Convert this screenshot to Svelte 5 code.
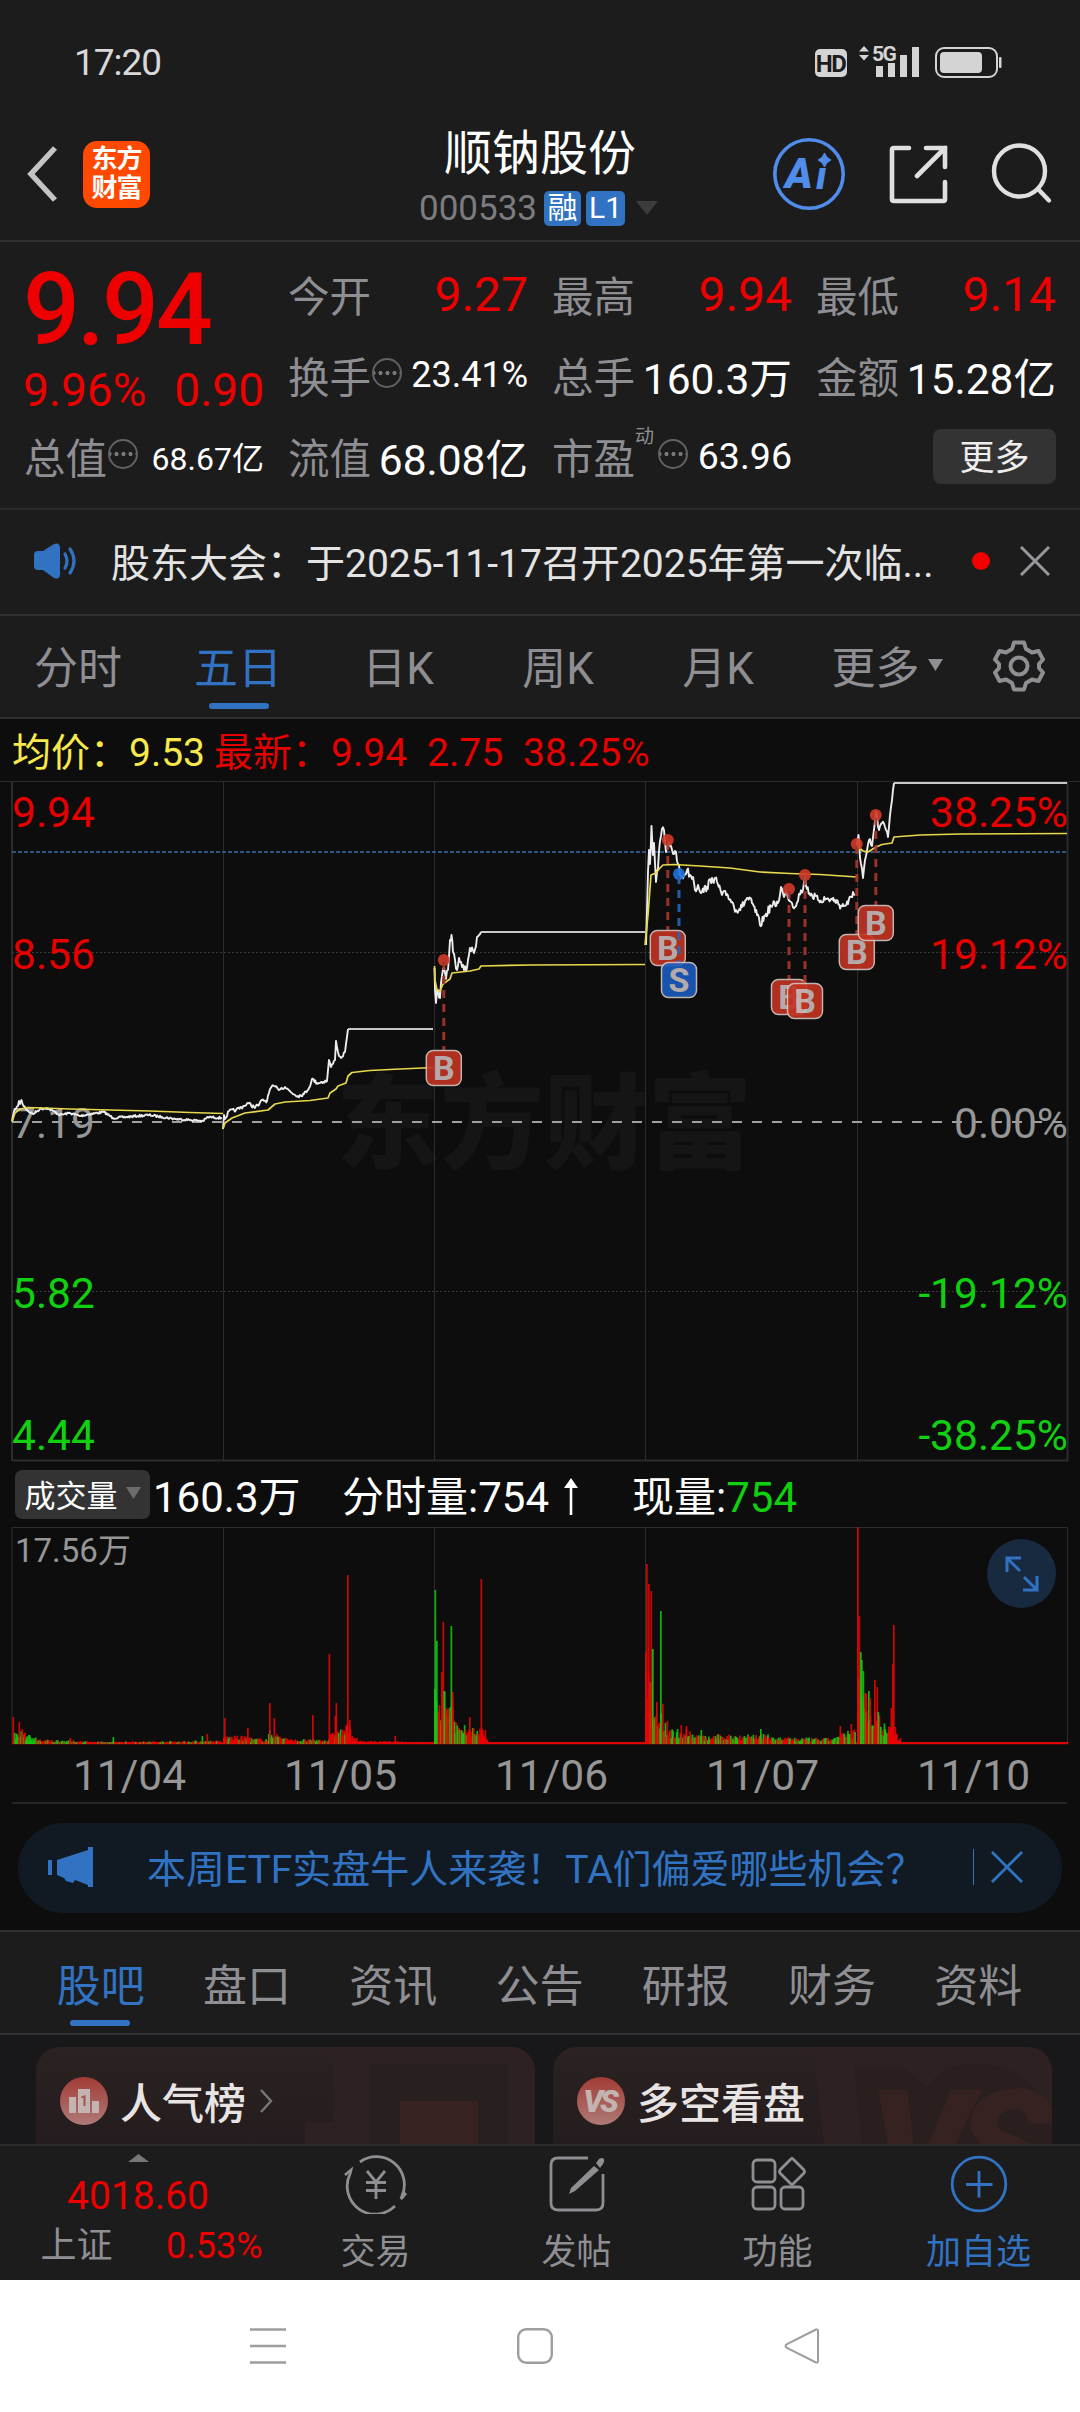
<script>
  const quoteRows = [
    [
      { label: '今开', value: '9.27', tone: 'up' },
      { label: '最高', value: '9.94', tone: 'up' },
      { label: '最低', value: '9.14', tone: 'up' },
    ],
    [
      { label: '换手', value: '23.41%', tip: true, size: 'small' },
      { label: '总手', value: '160.3万' },
      { label: '金额', value: '15.28亿' },
    ],
  ];
  const periods = ['分时', '五日', '日K', '周K', '月K'];
  const sections = ['股吧', '盘口', '资讯', '公告', '研报', '财务', '资料'];
  const dates = ['11/04', '11/05', '11/06', '11/07', '11/10'];

  let activePeriod = '五日';
  let activeSection = '股吧';

  const dayLines = [223, 434, 645, 857];

  let seed = 7;
  function random() {
    seed = (seed * 16807) % 2147483647;
    return seed / 2147483647;
  }

  // fills the gaps between key points with minute-level ticks
  function ticks(points, amp) {
    const out = [];
    for (let i = 0; i < points.length - 1; i++) {
      const [x1, y1] = points[i];
      const [x2, y2] = points[i + 1];
      const steps = Math.max(1, Math.round((x2 - x1) / 0.9));
      for (let s = 0; s < steps; s++) {
        const t = s / steps;
        const shake = s === 0 ? 0 : (random() - 0.5) * amp;
        out.push(`${(x1 + (x2 - x1) * t).toFixed(1)},${(y1 + (y2 - y1) * t + shake).toFixed(1)}`);
      }
    }
    const last = points[points.length - 1];
    out.push(`${last[0]},${last[1]}`);
    return out.join(' ');
  }

  const priceLines = [
    ticks([[12, 341], [13, 336], [15, 329], [18, 326], [19, 321], [20, 324], [21.5, 320], [23, 325], [28, 331], [33, 334], [40, 329], [47, 328], [53, 331], [60, 335], [70, 333], [80, 336], [90, 334], [104, 332], [113, 338], [126, 337], [138, 336], [149, 335], [162, 337], [176, 339], [190, 340], [203, 341], [208, 337], [222, 338]], 2.2),
    ticks([[223, 349], [224, 335], [225, 339], [229, 331], [236, 330], [244, 326], [248, 323], [254, 327], [259, 325], [262, 320], [267, 321], [270, 309], [274, 306], [278, 309], [285, 307], [292, 313], [298, 316], [304, 314], [309, 308], [312, 299], [317, 303], [327, 301], [329, 280], [331, 287], [335, 280], [336, 261], [339, 276], [341, 278], [345, 272], [347, 257], [348, 249]], 3.2),
    ticks([[434.5, 188], [435, 210], [436, 223], [437, 211], [438, 210], [440, 218], [442, 196], [444, 188], [446, 199], [448, 190], [450, 160], [451.5, 155], [453, 172], [455, 180], [457, 190], [459, 178], [460, 182], [462, 187], [466, 191], [468, 180], [470, 168], [474, 173], [477, 157], [479, 155], [481, 152]], 8),
    ticks([[646, 165], [648, 92], [649, 70], [650, 84], [651.5, 46], [653, 75], [654, 63], [656, 102], [658, 88], [660, 61], [662, 49], [664, 50], [666, 72], [668, 64], [671, 66], [674, 74], [676, 72], [678, 84], [681, 98], [684, 95], [687, 90], [690, 95], [693, 97], [695, 110], [698, 105], [702, 112], [707, 107], [712, 98], [717, 102], [722, 115], [727, 114], [732, 122], [736, 130], [742, 127], [747, 118], [752, 123], [757, 135], [760, 145], [765, 136], [771, 126], [778, 123], [781, 107], [784, 117], [787, 113], [791, 122], [795, 127], [799, 114], [803, 110], [805, 97], [807, 109], [812, 115], [818, 120], [826, 119], [835, 120], [841, 126], [848, 124], [853, 112], [855, 115]], 8),
    ticks([[857, 65], [858.5, 55], [860, 78], [863, 98], [866, 76], [869, 60], [872, 66], [874, 50], [876, 32], [879, 50], [882, 43], [885, 47], [888, 57], [890, 35], [893, 10], [894, 3]], 7),
  ];
  const limitLines = ['348,249 433,249', '481,152 645,152', '894,3 1067,3'];
  const averageLines = [
    '12,342 15,333 20,329 28,327.5 70,329 110,330 150,331 190,332.5 223,333.5',
    '223,349 225,343 232,338 245,333 268,330 275,324 285,322 310,320.5 328,318 330,313 336,309 338,306 346,303 348,296 352,292.5 370,290.5 400,289 434,287.5',
    '434.5,186 435,200 437,210 440,211 443,204 450,199 452,193 470,191 479,189 481,186 530,185 645,184.5',
    '645,165 648,135 651,95 656,93 660,88 663,85 674,84.5 700,86 730,88 760,92 790,93.5 820,94.5 857,97',
    '857,66 863,71 868,72 876,67 882,64.5 892,63 894,57 920,55 960,54 1067,53.5',
  ];

  const trades = [
    { x: 443.8, dot: 180, box: 288, side: 'B' },
    { x: 667.8, dot: 60, box: 168, side: 'B' },
    { x: 679, dot: 94, box: 200, side: 'S' },
    { x: 789, dot: 109, box: 217, side: 'B' },
    { x: 805, dot: 95, box: 221, side: 'B' },
    { x: 856.8, dot: 64, box: 172, side: 'B' },
    { x: 875.8, dot: 35, box: 143, side: 'B' },
  ];

  // [from, to, height at start, height at end, share of rising minutes]
  const volumeRanges = [
    [13, 24, 10, 12, 0.6], [24, 40, 9, 4, 0.4], [40, 90, 4, 2.5, 0.6], [90, 220, 2, 3, 0.75],
    [223, 250, 7, 7, 0.7], [250, 268, 5, 5, 0.6], [268, 288, 12, 5, 0.6], [288, 328, 4, 4, 0.6],
    [328, 346, 8, 16, 0.7], [346, 356, 18, 5, 1], [356, 434, 3, 1.6, 1],
    [434, 442, 58, 40, 0.6], [442, 452, 48, 42, 0.6], [452, 462, 26, 10, 0.3], [462, 482, 16, 14, 0.6], [482, 487, 12, 3, 1], [487, 645, 1.6, 1.6, 1],
    [645, 652, 80, 60, 0.9], [652, 665, 38, 24, 0.4], [665, 690, 12, 14, 0.5], [690, 712, 9, 6, 0.6], [712, 760, 8, 9, 0.55], [760, 775, 9, 7, 0.6], [775, 830, 6, 5, 0.6], [830, 855, 5, 14, 0.6],
    [857, 866, 60, 45, 0.5], [866, 880, 36, 24, 0.7], [880, 888, 20, 15, 0.4], [888, 900, 16, 5, 1], [900, 1067, 1.6, 1.6, 1],
  ];
  const volumePeaks = [
    [13, 27, 1], [19, 22, 1], [22, 15, 1], [29, 9, 0], [70, 6, 1], [113, 7, 0], [202, 8, 0], [207, 10, 1],
    [224.5, 26, 1], [247.5, 16, 1], [269.5, 41, 1], [274, 26, 1], [312.5, 29, 1], [329, 90, 1], [336, 41, 1], [335, 28, 1], [347.5, 169, 1], [349.5, 24, 1], [395, 8, 1],
    [435, 154, 0], [436.5, 103, 0], [441.5, 72, 1], [443, 122, 1], [444, 53, 0], [447, 34, 1], [451, 118, 0], [452.5, 52, 1], [469.5, 27, 1], [481, 165, 1], [485, 14, 1],
    [646.5, 180, 1], [648.5, 160, 1], [651, 153, 1], [652.5, 95, 0], [656.5, 42, 1], [660.5, 133, 0], [662.5, 40, 1], [667, 23, 1], [681, 19, 1], [686, 18, 1], [701, 14, 0], [760.5, 15, 0], [840, 18, 1], [851, 20, 1],
    [857.5, 217, 1], [859, 128, 1], [860.5, 92, 0], [861.5, 84, 0], [863, 73, 0], [866, 50, 1], [868.5, 53, 0], [870, 46, 1], [874.5, 64, 1], [877, 57, 1], [878, 32, 0], [891, 36, 1], [892.5, 80, 1], [893.5, 119, 1], [895, 17, 1],
  ];
  const bars = [];
  for (const [from, to, start, end, rising] of volumeRanges) {
    for (let x = from; x < to; x += 0.9) {
      const base = start + ((end - start) * (x - from)) / (to - from);
      bars.push({ x, h: Math.max(1.6, base * (0.4 + random() * 0.8)), up: random() < rising });
    }
  }
  for (const [x, h, up] of volumePeaks) bars.push({ x: x - 0.5, h, up: up === 1 });
</script>

<div class="screen">
  <div class="status">
    <span class="clock">17:20</span>
    <svg width="192" height="36" viewBox="812 44 192 36">
      <rect x="815" y="49" width="32" height="28" rx="5" fill="#d4d4d4" />
      <text x="830.500" y="71.500" class="hd">HD</text>
      <path d="M859 51.500 l5 -5.500 5 5.500z M859 55 l5 5.500 5 -5.500z" fill="#d4d4d4" />
      <text x="872" y="60.500" class="net">5G</text>
      <path d="M876 66h7v11h-7z M888 63h7v14h-7z M900 55h7v22h-7z M912 47h7v30h-7z" fill="#d4d4d4" />
      <rect x="936" y="48" width="61" height="29" rx="8" fill="none" stroke="#d4d4d4" stroke-width="2" />
      <rect x="940" y="52" width="42" height="21" rx="4" fill="#d4d4d4" />
      <rect x="999" y="57" width="2.500" height="11" rx="1" fill="#d4d4d4" />
    </svg>
  </div>

  <header>
    <div class="left">
      <svg width="34" height="58" viewBox="0 0 34 58">
        <path d="M30 3 L6 29 L30 55" fill="none" stroke="#c4c4c4" stroke-width="5.500" />
      </svg>
      <div class="logo"><span>东方</span><span>财富</span></div>
    </div>
    <div class="title">
      <h1>顺钠股份</h1>
      <div class="code">
        <span>000533</span><b>融</b><b class="level">L1</b>
        <svg width="22" height="14" viewBox="0 0 22 14"><path d="M0 0h22L11 14z" fill="#3c3c3c" /></svg>
      </div>
    </div>
    <div class="actions">
      <svg width="72" height="72" viewBox="0 0 72 72">
        <circle cx="36" cy="36" r="34.200" fill="none" stroke="#508cea" stroke-width="3.600" />
        <text x="12" y="49.500" class="ai">A</text>
        <text x="43" y="51" class="ai small">ı</text>
        <path d="M51.500 15 Q53 20 58 22 Q53 24 51.500 29 Q50 24 45 22 Q50 20 51.500 15z" fill="#508cea" stroke="#508cea" />
      </svg>
      <svg width="60" height="60" viewBox="0 0 60 60">
        <path d="M21 4 H6 Q4 4 4 6 V55 Q4 57 6 57 H55 Q57 57 57 55 V38 M38 4 H57 V23 M57 4 L29 32" fill="none" stroke="#e0e0e0" stroke-width="4.600" stroke-linecap="round" />
      </svg>
      <svg width="62" height="62" viewBox="0 0 62 62">
        <circle cx="28.500" cy="28" r="25.500" fill="none" stroke="#e0e0e0" stroke-width="4.400" />
        <path d="M47 46 L58 57.500" stroke="#e0e0e0" stroke-width="4.400" stroke-linecap="round" />
      </svg>
    </div>
  </header>

  <section class="quote">
    <div class="price">
      <strong>9.94</strong>
      <div class="change"><span>9.96%</span><span>0.90</span></div>
    </div>
    {#each quoteRows as row}
      {#each row as item}
        <div class="cell">
          <span class="label">{item.label}</span>
          {#if item.tip}<i class="tip"></i>{/if}
          <span class="value {item.tone ?? ''} {item.size ?? ''}">{item.value}</span>
        </div>
      {/each}
    {/each}
    <div class="cell">
      <span class="label">总值</span><i class="tip"></i><span class="value tiny">68.67亿</span>
    </div>
    <div class="cell"><span class="label">流值</span><span class="value">68.08亿</span></div>
    <div class="cell">
      <span class="label">市盈</span><sup>动</sup><i class="tip"></i><span class="value medium">63.96</span>
    </div>
    <div class="cell end"><button>更多</button></div>
  </section>

  <section class="news">
    <svg width="46" height="38" viewBox="0 0 46 38">
      <path d="M0 13 Q0 9 4 9 H9 L20 2 Q26 0 26 6 V32 Q26 38 20 36 L9 28 H4 Q0 28 0 24z" fill="#3173c2" />
      <path d="M31 12 Q35 19 31 26 M36 7 Q44 19 36 31" fill="none" stroke="#3173c2" stroke-width="3.200" stroke-linecap="round" />
    </svg>
    <p>股东大会：于2025-11-17召开2025年第一次临...</p>
    <i class="dot"></i>
    <svg width="30" height="30" viewBox="0 0 30 30"><path d="M1 1 L29 29 M29 1 L1 29" stroke="#98989c" stroke-width="3" /></svg>
  </section>

  <nav class="periods">
    {#each periods as period}
      <span class:active={period === activePeriod}>{period}</span>
    {/each}
    <span class="more">更多<svg width="15" height="12" viewBox="0 0 15 12"><path d="M0 0h15L7.500 12z" fill="#8e8e93" /></svg></span>
    <svg class="gear" width="54" height="54" viewBox="0 0 54 54">
      <path d="M22 3.500 H32 L34 10 L40 13.500 L46.500 12 L51 20.500 L47 25 V29 L51 33.500 L46.500 42 L40 40.500 L34 44 L32 50.500 H22 L20 44 L14 40.500 L7.500 42 L3 33.500 L7 29 V25 L3 20.500 L7.500 12 L14 13.500 L20 10z" />
      <circle cx="27" cy="27" r="8.500" />
    </svg>
  </nav>

  <section class="chart">
    <div class="legend">
      <span class="avg">均价：9.53</span>
      <span class="last">最新：<em>9.94</em><em>2.75</em><em>38.25%</em></span>
    </div>

    <svg class="plot" width="1080" height="682" viewBox="0 0 1080 682">
      <text x="336" y="381" class="watermark">东方财富</text>
      <g stroke="#2c2c2e">
        <path d="M0 1.500 H1080" />
        <path d="M12 1.500 V681 M1067.500 1.500 V681 M12 680.500 H1068" stroke-width="2" />
        {#each dayLines as x}
          <path d="M{x}.500 2 V680" />
        {/each}
        <path d="M12 172.500 H1067 M12 511.500 H1067" stroke="#3a3a3c" stroke-dasharray="2 2" />
      </g>
      <path d="M12 72 H1067" stroke="#2f5580" stroke-width="2" stroke-dasharray="4 2" />
      <path d="M12 342 H1067" stroke="#a0a0a0" stroke-width="1.800" stroke-dasharray="10 10" />

      <g class="scale">
        <text x="12" y="47" class="up">9.94</text>
        <text x="12" y="189" class="up">8.56</text>
        <text x="12" y="358" class="flat">7.19</text>
        <text x="12" y="528" class="down">5.82</text>
        <text x="12" y="670" class="down">4.44</text>
      </g>
      <g class="scale right">
        <text x="1068" y="47" class="up">38.25%</text>
        <text x="1068" y="189" class="up">19.12%</text>
        <text x="1068" y="358" class="flat">0.00%</text>
        <text x="1068" y="528" class="down">-19.12%</text>
        <text x="1068" y="670" class="down">-38.25%</text>
      </g>

      <g fill="none" stroke-linejoin="round">
        {#each priceLines as points}
          <polyline {points} stroke="#ececec" stroke-width="1.900" />
        {/each}
        {#each limitLines as points}
          <polyline {points} stroke="#c8c8c8" stroke-width="1.800" />
        {/each}
        {#each averageLines as points}
          <polyline {points} stroke="#e6d84a" stroke-width="1.700" />
        {/each}
      </g>

      {#each trades as t}
        <g class="trade" class:sell={t.side === 'S'}>
          <circle cx={t.x} cy={t.dot} r="6" />
          <path d="M{t.x} {t.dot + 2} V{t.box - 18}" stroke-width="3" stroke-dasharray="8 6" />
          <rect x={t.x - 17.5} y={t.box - 17.5} width="35" height="35" rx="7" />
          <text x={t.x} y={t.box + 12}>{t.side}</text>
        </g>
      {/each}
    </svg>

    <div class="volume-head">
      <button>成交量<svg width="15" height="12" viewBox="0 0 15 12"><path d="M0 0h15L7.500 12z" fill="#6c6c6c" /></svg></button>
      <span class="total">160.3万</span>
      <span class="minute">分时量:754</span>
      <svg class="arrow" width="14" height="37" viewBox="0 0 14 37"><path d="M5.700 6h2.600v31H5.700z M0 10 L7 0 L14 10z" fill="#fff" /></svg>
      <span class="now">现量:<em>754</em></span>
    </div>

    <div class="volume">
      <svg width="1080" height="219" viewBox="0 0 1080 219">
        <path d="M12 .500 H1068 M12 0 V217 M1067.500 0 V217" fill="none" stroke="#2c2c2e" />
        {#each dayLines as x}
          <path d="M{x}.500 0 V217" stroke="#2c2c2e" />
        {/each}
        <text x="15" y="35" class="max">17.56万</text>
        <path d="M12 216.200 H1068" stroke="#d01212" stroke-width="2" />
        {#each bars as bar}
          <rect x={bar.x} y={217 - bar.h} width="1.700" height={bar.h} fill={bar.up ? '#e80505' : '#12c812'} fill-opacity=".88" />
        {/each}
      </svg>
      <button class="expand" aria-label="全屏">
        <svg width="34" height="36" viewBox="0 0 34 36"><path d="M2 16 V2 H16 M2 2 L15 15 M32 20 V34 H18 M32 34 L19 21" fill="none" stroke="#3173c2" stroke-width="3" /></svg>
      </button>
    </div>

    <div class="dates">
      {#each dates as date}<span>{date}</span>{/each}
    </div>

    <div class="banner">
      <svg width="46" height="40" viewBox="0 0 46 40">
        <path d="M0 13h4v15H0z M9 13 L40 3 V0 H45 V40 H40 V38 L27 33 L25 36 L18 34 L16 31 L9 28z" fill="#3173c2" />
      </svg>
      <p>本周ETF实盘牛人来袭！TA们偏爱哪些机会？</p>
      <i></i>
      <svg width="34" height="34" viewBox="0 0 34 34"><path d="M2 2 L32 32 M32 2 L2 32" stroke="#3173c2" stroke-width="2.800" /></svg>
    </div>
  </section>

  <nav class="sections">
    {#each sections as section}
      <span class:active={section === activeSection}>{section}</span>
    {/each}
  </nav>

  <section class="cards">
    <div class="card">
      <svg class="art" width="260" height="98" viewBox="0 0 260 98">
        <path d="M30 98 V75 H59 V0 H260 V98z" fill="#2d2221" />
        <path d="M94 98 V17 H233 V98z" fill="#281f1f" />
        <path d="M125 98 V54 H203 V98z" fill="#352221" />
      </svg>
      <svg width="48" height="48" viewBox="0 0 48 48">
        <defs>
          <linearGradient id="badge" x1="0" y1="0" x2="0" y2="1">
            <stop offset="0" stop-color="#a23c36" /><stop offset="1" stop-color="#ae7a76" />
          </linearGradient>
        </defs>
        <circle cx="24" cy="24" r="24" fill="url(#badge)" />
        <path d="M9 20h7v16H9z M18 12h12v24H18z M32 24h7v12h-7z" fill="#c4b4b1" />
        <text x="24" y="29" class="rank">1</text>
      </svg>
      <h2>人气榜</h2>
      <svg class="chevron" width="14" height="24" viewBox="0 0 14 24"><path d="M2 1 L12 12 L2 23" fill="none" stroke="#777" stroke-width="2.400" /></svg>
    </div>
    <div class="card">
      <svg class="art" width="260" height="98" viewBox="0 0 260 98">
        <path d="M21 0 H260 V98 H32z" fill="#2d2221" />
        <path d="M62 20 H110 L135 40 Q150 17 185 17 Q230 18 248 48 L260 60 V98 H70z" fill="#291f1f" />
        <text x="76" y="156" class="versus">VS</text>
      </svg>
      <svg width="48" height="48" viewBox="0 0 48 48">
        <circle cx="24" cy="24" r="24" fill="url(#badge)" />
        <text x="22.500" y="35" class="vs">VS</text>
      </svg>
      <h2>多空看盘</h2>
    </div>
  </section>

  <footer>
    <div class="index">
      <svg width="21" height="8" viewBox="0 0 21 8"><path d="M0 8h21L10.500 0z" fill="#77777b" /></svg>
      <strong>4018.60</strong>
      <div><span>上证</span><em>0.53%</em></div>
    </div>
    <div class="tool">
      <svg width="66" height="60" viewBox="0 0 66 60">
        <path d="M17 8 A28 28 0 0 1 59 42 L58 45 L63 39 M52 52 A28 28 0 0 1 7 20 L8 16 L2 21" />
        <path d="M24 17 L33 28 L42 17 M33 28 V45 M23 28.500 H43 M23 36.500 H43" />
      </svg>
      <span>交易</span>
    </div>
    <div class="tool">
      <svg width="66" height="60" viewBox="0 0 66 60">
        <path d="M44 4 H14 Q7 4 7 11 V49 Q7 56 14 56 H52 Q59 56 59 49 V20" />
        <path class="solid" d="M50 12 L55 16 L31 37 L25 40 L27 34z M52 9 L55 5 Q58 3 60 5 Q61 7 59 10 L56 14z" />
      </svg>
      <span>发帖</span>
    </div>
    <div class="tool">
      <svg width="66" height="60" viewBox="0 0 66 60">
        <rect x="8" y="6" width="22" height="22" rx="4" />
        <rect x="8" y="33" width="22" height="22" rx="4" />
        <rect x="36" y="33" width="22" height="22" rx="4" />
        <path d="M46 5 Q47 4 48 5 L59 16 Q60 17.500 59 19 L48 30 Q47 31 46 30 L35 19 Q34 17.500 35 16z" />
      </svg>
      <span>功能</span>
    </div>
    <div class="tool add">
      <svg width="66" height="60" viewBox="0 0 66 60">
        <circle cx="33" cy="30" r="26.800" />
        <path d="M33 17 V43.500 M20 30.500 H46.500" />
      </svg>
      <span>加自选</span>
    </div>
  </footer>

  <div class="system">
    <svg width="36" height="36" viewBox="0 0 36 36"><path d="M0 1.500 H36 M0 18 H36 M0 34.500 H36" /></svg>
    <svg width="36" height="36" viewBox="0 0 36 36"><rect x="1.200" y="1.200" width="33.600" height="33.600" rx="8" /></svg>
    <svg width="36" height="36" viewBox="0 0 36 36"><path d="M32 1.500 L3 16 Q0 18 3 20 L32 34.500 Q34 35 34 33 V3 Q34 1 32 1.500z" stroke-width="2" /></svg>
  </div>
</div>

<style>
  :global(body) {
    background: #1c1c1c;
  }

  .screen {
    width: 1080px;
    height: 2412px;
    overflow: hidden;
    display: flex;
    flex-direction: column;
    background: #1c1c1c;
    color: #fff;
    font-family: Roboto, "Noto Sans CJK SC", sans-serif;
  }

  .screen *,
  .screen {
    box-sizing: border-box;
  }

  svg {
    display: block;
    flex: none;
  }

  h1, h2, p {
    margin: 0;
    font-weight: 400;
  }

  em, i {
    font-style: normal;
  }

  button {
    border: 0;
    padding: 0;
    color: inherit;
    font-family: inherit;
  }

  .status {
    height: 110px;
    flex: none;
    display: flex;
    align-items: center;
    justify-content: space-between;
    padding: 14px 76px 0 74px;
  }

  .clock {
    font-size: 37px;
    letter-spacing: -1px;
    color: #d8d8d8;
  }

  .hd {
    font-size: 24px;
    font-weight: 700;
    text-anchor: middle;
    fill: #1c1c1c;
    letter-spacing: -1.500px;
  }

  .net {
    font-size: 21px;
    font-weight: 700;
    fill: #d4d4d4;
    letter-spacing: -1.500px;
  }

  header {
    height: 132px;
    flex: none;
    display: grid;
    grid-template-columns: 1fr auto 1fr;
    border-bottom: 2px solid #303032;
  }

  .left {
    display: flex;
    align-items: center;
    gap: 24px;
    padding: 0 0 2px 25px;
  }

  .logo {
    width: 67px;
    height: 67px;
    border-radius: 14px;
    background: #ff4800;
    display: flex;
    flex-direction: column;
    align-items: center;
    justify-content: center;
    font-size: 26px;
    font-weight: 700;
    line-height: 29px;
    letter-spacing: -1px;
  }

  .title {
    display: flex;
    flex-direction: column;
    align-items: center;
    padding-right: 3px;
  }

  h1 {
    font-size: 48px;
    line-height: 56px;
    margin: 16px 0 0 3px;
  }

  .code {
    height: 36px;
    margin-top: 8px;
    display: flex;
    align-items: center;
    font-size: 35px;
    color: #7c7c80;
  }

  .code b {
    width: 37px;
    height: 35px;
    margin-left: 7px;
    border-radius: 5px;
    background: #3173c2;
    color: #fff;
    font-size: 30px;
    font-weight: 400;
    line-height: 34px;
    text-align: center;
  }

  .code .level {
    width: 39px;
    margin-left: 5px;
  }

  .code svg {
    margin-left: 11px;
  }

  .actions {
    display: flex;
    align-items: center;
    justify-content: flex-end;
    padding: 0 27px 2px 0;
    gap: 43px;
  }

  .ai {
    font-size: 42px;
    font-weight: 900;
    font-style: italic;
    fill: #508cea;
  }

  .ai.small {
    font-size: 38px;
  }

  .quote {
    height: 268px;
    flex: none;
    display: grid;
    grid-template-columns: repeat(4, 239px);
    grid-template-rows: repeat(3, 81px);
    column-gap: 25px;
    padding: 12px 24px 0 25px;
    border-bottom: 2px solid #29292b;
  }

  .price {
    grid-row: span 2;
    color: #ee0000;
    margin-left: -2px;
  }

  .price strong {
    display: block;
    height: 106px;
    font-size: 100px;
    font-weight: 500;
    line-height: 111px;
    letter-spacing: -2.800px;
  }

  .change {
    display: flex;
    justify-content: space-between;
    font-size: 46px;
    line-height: 60px;
  }

  .cell {
    display: flex;
    align-items: center;
    justify-content: space-between;
    white-space: nowrap;
  }

  .label {
    font-size: 41.500px;
    color: #8e8e93;
    margin: -2px -2px 0 -1px;
  }

  .value {
    font-size: 42.500px;
    margin: -1px 0 0 auto;
  }

  .value.up {
    font-size: 48px;
    color: #ee0000;
  }

  .value.small {
    font-size: 36px;
  }

  .value.tiny {
    font-size: 32px;
  }

  .value.medium {
    font-size: 37.500px;
  }

  .tip {
    width: 30px;
    height: 30px;
    border: 2px solid #626266;
    border-radius: 50%;
    margin: -5px 0 0 3px;
    background: radial-gradient(circle, #77777b 1.800px, transparent 2.300px) 0 0 / 7px 26px;
    background-position: 3px 0;
  }

  sup {
    align-self: flex-start;
    width: 20px;
    font-size: 19px;
    line-height: 24px;
    color: #8e8e93;
    margin: 9px 0 0 2px;
  }

  .end {
    justify-content: flex-end;
  }

  .end button {
    width: 123px;
    height: 55px;
    padding-bottom: 4px;
    border-radius: 8px;
    background: #333;
    color: #eee;
    font-size: 35px;
  }

  .news {
    height: 106px;
    flex: none;
    display: flex;
    align-items: center;
    padding: 0 30px 2px 34px;
    border-bottom: 2px solid #303032;
  }

  .news p {
    width: 836px;
    margin: -3px 0 0 31px;
    font-size: 39px;
    color: #e4e4e4;
    white-space: nowrap;
  }

  .dot {
    width: 18px;
    height: 18px;
    margin: 0 30px 0 26px;
    border-radius: 50%;
    background: #f20000;
  }

  .periods {
    height: 103px;
    flex: none;
    display: flex;
    align-items: center;
    padding-bottom: 2px;
    border-bottom: 2px solid #303032;
    font-size: 44px;
    color: #8e8e93;
  }

  .periods span {
    width: 160px;
    height: 100%;
    display: flex;
    align-items: center;
    justify-content: center;
    position: relative;
    padding: 0 4px 1px 0;
  }

  .active {
    color: #3173c2;
  }

  .periods .active::after,
  .sections .active::after {
    content: "";
    position: absolute;
    bottom: 6px;
    left: calc(50% - 31px);
    width: 60px;
    height: 6px;
    border-radius: 3px;
    background: #3173c2;
  }

  .sections .active::after {
    bottom: 7px;
  }

  .periods .more {
    width: 178px;
    gap: 8px;
  }

  .gear {
    margin-left: 14px;
    fill: none;
    stroke: #8e8e93;
    stroke-width: 4;
    stroke-linejoin: round;
  }

  .chart {
    height: 1211px;
    flex: none;
    background: #0d0d0d;
  }

  .legend {
    height: 61px;
    display: flex;
    align-items: center;
    padding: 0 0 2px 12px;
    font-size: 39px;
    white-space: nowrap;
  }

  .avg {
    width: 202px;
    color: #f7e94b;
  }

  .last {
    color: #e60000;
  }

  .last em {
    margin-right: 20px;
  }

  .plot {
    height: 682px;
  }

  .watermark {
    font-size: 104px;
    font-weight: 900;
    fill: #151515;
  }

  .scale text {
    font-size: 42.500px;
  }

  .right text {
    text-anchor: end;
  }

  .scale .up {
    fill: #e60000;
  }

  .scale .down {
    fill: #10d010;
  }

  .scale .flat {
    fill: #969696;
  }

  .trade {
    fill: #d23a28;
    stroke: #a8382c;
    opacity: 0.9;
  }

  .trade circle {
    stroke: none;
  }

  .trade rect {
    fill: #c23322;
    stroke: #d6c4c2;
    stroke-width: 1.500;
  }

  .trade text {
    font-size: 34px;
    font-weight: 700;
    text-anchor: middle;
    fill: #c8bcbc;
    stroke: none;
  }

  .sell {
    fill: #1f72e0;
    stroke: #2866bd;
  }

  .sell rect {
    fill: #1a5cc0;
  }

  .volume-head {
    height: 65px;
    display: flex;
    align-items: center;
    padding: 0 0 2px 15px;
    font-size: 42px;
    white-space: nowrap;
  }

  .volume-head button {
    width: 135px;
    height: 49px;
    margin-top: 2px;
    padding-bottom: 3px;
    border-radius: 7px;
    background: #333;
    font-size: 31px;
    display: flex;
    align-items: center;
    justify-content: center;
    gap: 8px;
  }

  .total {
    width: 192px;
    margin-left: 3px;
  }

  .minute {
    margin-left: -3px;
  }

  .arrow {
    margin: 6px 54px 0 15px;
  }

  .now em {
    color: #10d010;
  }

  .volume {
    height: 219px;
    position: relative;
  }

  .max {
    font-size: 33px;
    fill: #969696;
  }

  .expand {
    position: absolute;
    top: 12px;
    right: 24px;
    width: 69px;
    height: 69px;
    border-radius: 50%;
    background: #182a40;
    display: flex;
    align-items: center;
    justify-content: center;
  }

  .dates {
    height: 58px;
    margin: 0 13px 0 12px;
    padding-left: 12px;
    border-bottom: 2px solid #262628;
    display: flex;
    font-size: 42.500px;
    line-height: 60px;
    color: #969696;
  }

  .dates span {
    width: 211px;
    flex: none;
    text-align: center;
  }

  .banner {
    height: 90px;
    margin: 19px 18px 0;
    padding: 0 38px 2px 30px;
    border-radius: 45px;
    background: #111a22;
    color: #3173c2;
    display: flex;
    align-items: center;
  }

  .banner p {
    flex: 1;
    margin: -2px 0 0 53px;
    font-size: 39px;
    white-space: nowrap;
  }

  .banner i {
    width: 1px;
    height: 36px;
    margin-right: 16px;
    background: #3173c2;
  }

  .sections {
    height: 105px;
    flex: none;
    display: flex;
    padding: 0 28px;
    border-top: 2px solid #303032;
    border-bottom: 2px solid #303032;
    font-size: 44px;
    color: #8e8e93;
  }

  .sections span {
    flex: 1;
    display: flex;
    align-items: center;
    justify-content: center;
    position: relative;
    padding-right: 1px;
  }

  .cards {
    height: 109px;
    flex: none;
    display: grid;
    grid-template-columns: 499px 499px;
    gap: 18px;
    padding: 12px 0 0 36px;
    background: #18181a;
  }

  .card {
    position: relative;
    overflow: hidden;
    border-radius: 24px 24px 0 0;
    background: linear-gradient(#2b2221, #241c1e);
    display: flex;
    align-items: center;
    padding: 10px 0 0 24px;
  }

  .card > * {
    position: relative;
  }

  .card .art {
    position: absolute;
    top: 0;
    right: 0;
  }

  .card h2 {
    margin-left: 12px;
    font-size: 42px;
    font-weight: 500;
    color: #e8e4e4;
  }

  .chevron {
    margin-left: 13px;
  }

  .rank {
    font-size: 14px;
    font-weight: 700;
    text-anchor: middle;
    fill: #a5524c;
  }

  .vs {
    font-size: 31px;
    font-weight: 900;
    font-style: italic;
    text-anchor: middle;
    fill: #c4b4b1;
    letter-spacing: -3px;
  }

  .versus {
    font-size: 160px;
    font-weight: 900;
    font-style: italic;
    letter-spacing: -14px;
    fill: #352221;
  }

  footer {
    height: 136px;
    flex: none;
    display: flex;
    border-top: 2px solid #29292b;
  }

  .index {
    width: 276px;
    padding-top: 8px;
    display: flex;
    flex-direction: column;
    align-items: center;
    color: #ee0000;
  }

  .index strong {
    font-size: 39px;
    font-weight: 400;
    line-height: 46px;
    margin-top: 11px;
  }

  .index div {
    width: 222px;
    display: flex;
    justify-content: space-between;
    font-size: 36px;
    line-height: 48px;
    margin: 3px 0 0 27px;
  }

  .index span {
    color: #8e8e93;
  }

  .tool {
    width: 201px;
    padding-top: 8px;
    display: flex;
    flex-direction: column;
    align-items: center;
    font-size: 35px;
    line-height: 44px;
    color: #8e8e93;
  }

  .tool svg,
  .tool span {
    margin-right: 2px;
  }

  .tool svg {
    fill: none;
    stroke: currentColor;
    stroke-width: 2.800;
    margin-bottom: 17px;
  }

  .tool .solid {
    fill: currentColor;
    stroke: none;
  }

  .tool.add {
    color: #3173c2;
  }

  .system {
    height: 133px;
    flex: none;
    background: #fff;
    display: flex;
    align-items: center;
    justify-content: space-between;
    padding: 0 260px 1px 250px;
  }

  .system svg {
    fill: none;
    stroke: #9e9e9e;
    stroke-width: 2.400;
  }
</style>
